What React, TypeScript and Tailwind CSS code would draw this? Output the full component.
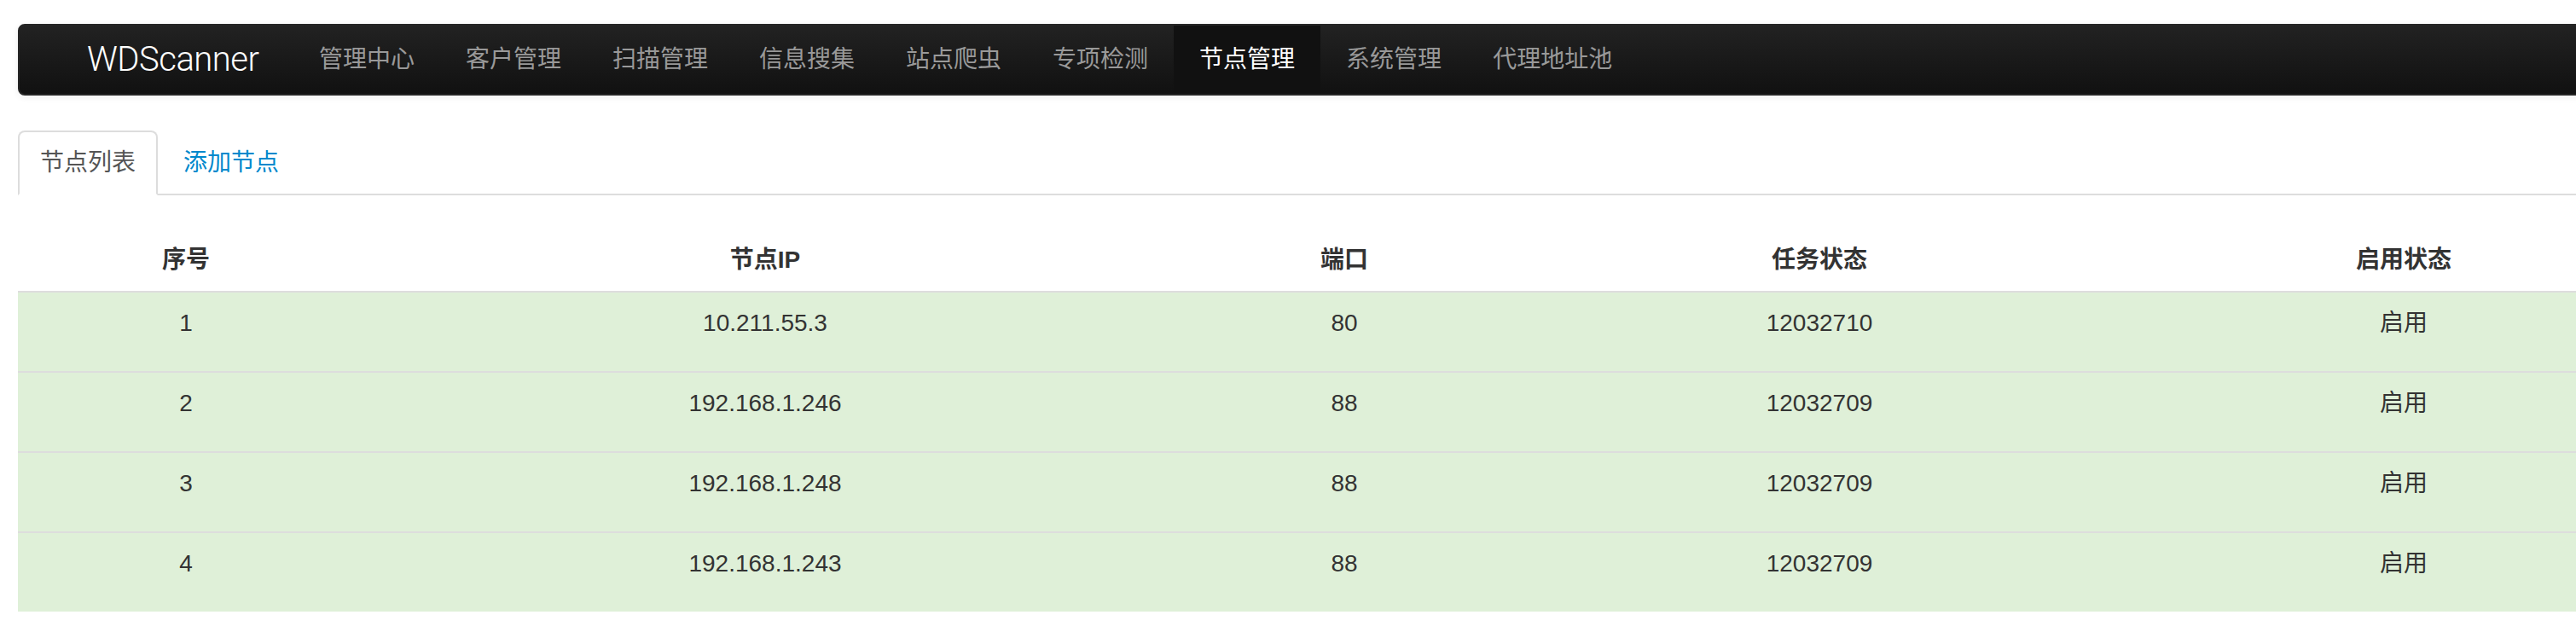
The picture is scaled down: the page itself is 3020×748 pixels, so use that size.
import React from 'react';

const navItems = ['管理中心', '客户管理', '扫描管理', '信息搜集', '站点爬虫', '专项检测', '节点管理', '系统管理', '代理地址池'];

const nodes = [
  { id: 1, ip: '10.211.55.3', port: '80', task: '12032710', state: '启用' },
  { id: 2, ip: '192.168.1.246', port: '88', task: '12032709', state: '启用' },
  { id: 3, ip: '192.168.1.248', port: '88', task: '12032709', state: '启用' },
  { id: 4, ip: '192.168.1.243', port: '88', task: '12032709', state: '启用' },
];

const font = "font-['Liberation_Sans','Noto_Sans_CJK_SC',sans-serif]";

export default function App() {
  const active = '节点管理';

  return (
    <div className={`w-[3020px] h-[748px] overflow-hidden bg-white pl-[21px] pt-[28px] text-[#333] ${font}`}>
      {/* top navbar */}
      <div className="w-[3200px] h-[84px] rounded-[8px] border-2 border-[#252525] bg-gradient-to-b from-[#222222] to-[#111111] shadow-[0_2px_8px_rgba(0,0,0,0.065)] flex items-stretch">
        <div className="w-[321px] pl-[79px] flex items-center text-[40px] leading-[40px] font-light text-white font-['Roboto',sans-serif] tracking-[-0.5px]">
          WDScanner
        </div>
        <ul className="flex items-stretch">
          {navItems.map(item => (
            <li
              key={item}
              className={`px-[30px] flex items-center text-[28px] leading-[40px] ${
                item === active ? 'bg-[#111111] text-white' : 'text-[#999999]'
              }`}
            >
              {item}
            </li>
          ))}
        </ul>
      </div>

      {/* tabs */}
      <ul className="mt-[41px] w-[3200px] flex border-b-2 border-[#dddddd]">
        <li className="-mb-[2px] mr-[4px] px-[24px] py-[16px] text-[28px] leading-[40px] text-[#555555] bg-white border-2 border-[#dddddd] border-b-transparent rounded-t-[8px]">
          节点列表
        </li>
        <li className="-mb-[2px] mr-[4px] px-[24px] py-[16px] text-[28px] leading-[40px] text-[#0088cc] border-2 border-transparent">
          添加节点
        </li>
      </ul>

      {/* node table */}
      <table className="mt-[40px] w-[3122px] table-fixed border-collapse text-[28px] leading-[40px]">
        <colgroup>
          <col className="w-[394px]" />
          <col className="w-[964px]" />
          <col className="w-[394px]" />
          <col className="w-[720px]" />
          <col className="w-[650px]" />
        </colgroup>
        <thead>
          <tr>
            <th className="py-[16px] px-[16px] text-center font-bold">序号</th>
            <th className="py-[16px] px-[16px] text-center font-bold">节点IP</th>
            <th className="py-[16px] px-[16px] text-center font-bold">端口</th>
            <th className="py-[16px] px-[16px] text-center font-bold">任务状态</th>
            <th className="py-[16px] px-[16px] text-center font-bold">启用状态</th>
          </tr>
        </thead>
        <tbody>
          {nodes.map(n => (
            <tr key={n.id} className="bg-[#dff0d8]">
              <td className="border-t-2 border-[#dddddd] pt-[16px] pb-[36px] px-[16px] text-center align-top">{n.id}</td>
              <td className="border-t-2 border-[#dddddd] pt-[16px] pb-[36px] px-[16px] text-center align-top">{n.ip}</td>
              <td className="border-t-2 border-[#dddddd] pt-[16px] pb-[36px] px-[16px] text-center align-top">{n.port}</td>
              <td className="border-t-2 border-[#dddddd] pt-[16px] pb-[36px] px-[16px] text-center align-top">{n.task}</td>
              <td className="border-t-2 border-[#dddddd] pt-[16px] pb-[36px] px-[16px] text-center align-top">{n.state}</td>
            </tr>
          ))}
        </tbody>
      </table>
    </div>
  );
}
